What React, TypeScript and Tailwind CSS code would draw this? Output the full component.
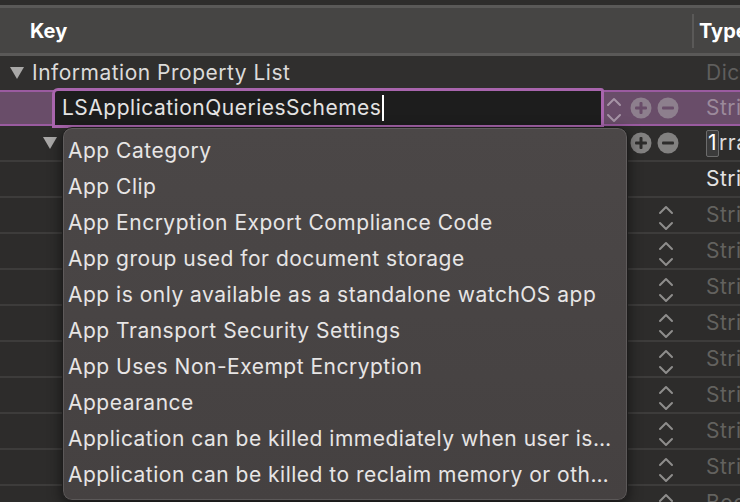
import React from "react"

const font = { fontFamily: "Inter, 'Noto Sans', sans-serif", letterSpacing: "0.5px" }

const suggestions = [
  "App Category",
  "App Clip",
  "App Encryption Export Compliance Code",
  "App group used for document storage",
  "App is only available as a standalone watchOS app",
  "App Transport Security Settings",
  "App Uses Non-Exempt Encryption",
  "Appearance",
  "Application can be killed immediately when user is shutting down",
  "Application can be killed to reclaim memory or other resources",
]

function Chevrons({ color = "#8e8d8c" }: { color?: string }) {
  return (
    <svg width="16" height="26" viewBox="0 0 16 26" fill="none">
      <polyline points="2,8 8,2 14,8" stroke={color} strokeWidth="2" strokeLinecap="round" strokeLinejoin="round" />
      <polyline points="2,18 8,24 14,18" stroke={color} strokeWidth="2" strokeLinecap="round" strokeLinejoin="round" />
    </svg>
  )
}

function CircleBtn({ plus, fill, mark }: { plus?: boolean; fill: string; mark: string }) {
  return (
    <svg width="22" height="22" viewBox="0 0 22 22">
      <circle cx="11" cy="11" r="10.5" fill={fill} />
      <rect x="5" y="9.5" width="12" height="3" rx="1" fill={mark} />
      {plus && <rect x="9.5" y="5" width="3" height="12" rx="1" fill={mark} />}
    </svg>
  )
}

function Triangle({ color = "#a9a8a7" }: { color?: string }) {
  return (
    <svg width="16" height="14" viewBox="0 0 16 14">
      <polygon points="1,1 15,1 8,13" fill={color} />
    </svg>
  )
}

function TypeCell({ children, className }: { children: React.ReactNode; className: string }) {
  return <div className={`flex-1 min-w-0 overflow-hidden whitespace-nowrap pl-[14px] ${className}`}>{children}</div>
}

export default function App() {
  const plainRows = Array.from({ length: 9 })

  return (
    <div className="relative w-[740px] h-[502px] overflow-hidden bg-[#2d2c2b] text-[21px] select-none" style={font}>
      {/* header */}
      <div className="h-[5px] bg-[#2e2d2c]" />
      <div className="h-[51px] bg-[#464544] border-t-[3px] border-b-[3px] border-[#5a5958] flex items-center text-[20px] tracking-normal">
        <div className="w-[692px] shrink-0 pl-[30px] font-bold text-white">Key</div>
        <div className="h-[34px] w-[2px] shrink-0 bg-[#5a5958]" />
        <div className="flex-1 min-w-0 overflow-hidden whitespace-nowrap pl-[5px] font-bold text-white">Type</div>
      </div>

      {/* row 1 */}
      <div className="h-[34px] flex items-center bg-[#302f2e]">
        <div className="w-[692px] shrink-0 flex items-center pl-[9px] gap-[7px] text-[#dcdbda]">
          <Triangle />
          <span>Information Property List</span>
        </div>
        <TypeCell className="text-[#5f5e5d]">Dictionary</TypeCell>
      </div>

      {/* row 2 selected */}
      <div className="h-[36px] flex items-center bg-[#694d69] border-y-2 border-[#9a5ba0]">
        <div className="w-[604px] shrink-0 h-full flex">
          <div className="ml-[52px] flex-1 -my-[4px] h-[40px] rounded-tl-[6px] rounded-tr-[3px] border-[3px] border-[#a865ad] bg-[#1d1d1d] flex items-center pl-[7px] text-[#e4e3e3]">
            <span>LSApplicationQueriesSchemes</span>
            <span className="w-[2px] h-[26px] bg-white ml-[1px]" />
          </div>
        </div>
        <div className="w-[88px] shrink-0 flex items-center pl-[2px]">
          <div className="mt-[4px]">
            <Chevrons color="#a694a6" />
          </div>
          <div className="ml-[8px]">
            <CircleBtn plus fill="#8d7f8d" mark="#694d69" />
          </div>
          <div className="ml-[5px]">
            <CircleBtn fill="#8d7f8d" mark="#694d69" />
          </div>
        </div>
        <TypeCell className="text-[#9c8a9c]">String</TypeCell>
      </div>

      {/* row 3 */}
      <div className="h-[36px] flex items-center border-b-2 border-[#3d3c3b]">
        <div className="w-[604px] shrink-0 pl-[42px]">
          <Triangle />
        </div>
        <div className="w-[88px] shrink-0 flex items-center pl-[26px]">
          <CircleBtn plus fill="#828180" mark="#2d2c2b" />
          <div className="ml-[5px]">
            <CircleBtn fill="#828180" mark="#2d2c2b" />
          </div>
        </div>
        <TypeCell className="flex items-center text-[#dcdbda]">
          <span className="h-[27px] px-[1px] flex items-center bg-[#3b3b3b] border border-[#6c6c6c] rounded-[2px] text-white">1</span>
          <span>rray</span>
        </TypeCell>
      </div>

      {/* row 4 */}
      <div className="h-[36px] flex items-center border-b-2 border-[#3d3c3b]">
        <div className="w-[692px] shrink-0" />
        <TypeCell className="text-[#e4e3e3]">String</TypeCell>
      </div>

      {/* remaining rows */}
      {plainRows.map((_, i) => (
        <div key={i} className="h-[36px] flex items-center border-b-2 border-[#3d3c3b]">
          <div className="w-[604px] shrink-0" />
          <div className="w-[88px] shrink-0 pl-[54px] pt-[5px]">
            <Chevrons />
          </div>
          <TypeCell className="text-[#63625f]">{i === 8 ? "Boolean" : "String"}</TypeCell>
        </div>
      ))}

      {/* suggestion popup */}
      <div className="absolute left-[62px] top-[127px] w-[566px] h-[374px] rounded-[10px] bg-gradient-to-b from-[#4b4747] to-[#454141] border border-[#1e1d1d] shadow-[0_4px_14px_rgba(0,0,0,0.55),inset_0_0_0_1px_rgba(255,255,255,0.12)] pt-[5px]">
        {suggestions.map((s) => (
          <div key={s} className="h-[36px] flex items-center pl-[5px] pr-[14px] text-[#e7e5e5]">
            <span className="truncate">{s}</span>
          </div>
        ))}
      </div>
    </div>
  )
}
